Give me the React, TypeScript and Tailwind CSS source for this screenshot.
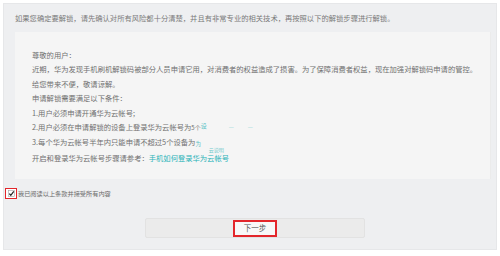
import React from "react";

const font = { fontFamily: '"Noto Sans CJK SC", "Noto Sans", sans-serif' };

export default function App() {
  return (
    <div className="w-[500px] h-[256px] bg-white pt-[3px] px-[3px] overflow-hidden" style={font}>
      <div className="h-[247px] bg-[#eeeff1] border border-[#e6e7e9] flex flex-col">
        <div className="h-[28px] flex items-center pl-[11px] text-[7.3px] text-[#7a7a7a] whitespace-nowrap">
          如果您确定要解锁，请先确认对所有风险都十分清楚，并且有非常专业的相关技术，再按照以下的解锁步骤进行解锁。
        </div>
        <div className="ml-[11px] mr-[5px] h-[147px] bg-[#f5f5f5] border-r border-[#ebebeb] pl-[17px] pt-[16px] text-[7.3px] leading-[14.4px] text-[#707070] whitespace-nowrap">
          <div>尊敬的用户：</div>
          <div>近期，华为发现手机刷机解锁码被部分人员申请它用，对消费者的权益造成了损害。为了保障消费者权益，现在加强对解锁码申请的管控。</div>
          <div>给您带来不便，敬请谅解。</div>
          <div>申请解锁需要满足以下条件：</div>
          <div>1.用户必须申请开通华为云帐号;</div>
          <div>
            2.用户必须在申请解锁的设备上登录华为云帐号为
            <span className="text-[6px]">5个</span>
            <span className="text-[6px] text-[#5cc3c6] relative -top-[2px]">设</span>
            <span className="ml-[22px] text-[5px] text-[#9fdadb] relative -top-[1px]">一</span>
            <span className="ml-[14px] text-[5px] text-[#9fdadb] relative -top-[1px]">一</span>
          </div>
          <div>
            3.每个华为云帐号半年内只能申请不超过5个设备为
            <span className="text-[5.5px] text-[#5cc3c6] relative top-[1px]">为</span>
          </div>
          <div>
            开启和登录华为云帐号步骤请参考：
            <span className="relative text-[#29b3b8]">
              手机如何登录华为云帐号
              <span className="absolute left-[60px] -top-[6px] text-[5px] text-[#6fcacc] leading-none">云说明</span>
            </span>
          </div>
        </div>
        <div className="mt-[9px] h-[11px] flex items-center pl-[1px]">
          <div className="w-[12px] h-[11px] border border-[#e3262b] flex items-center justify-center bg-white">
            <svg width="7" height="7" viewBox="0 0 8 8">
              <rect x="0.5" y="0.5" width="7" height="7" fill="#fff" stroke="#9a9a9a" strokeWidth="0.6" />
              <path d="M1.5 4.2 L3.2 6 L6.6 1.6" fill="none" stroke="#222" strokeWidth="1.4" />
            </svg>
          </div>
          <span className="ml-[1px] text-[6.2px] text-[#6a6a6a] whitespace-nowrap">我已阅读以上条款并接受所有内容</span>
        </div>
        <div className="mt-[19px] ml-[141px] w-[220px] h-[20px] bg-[#ebebeb] border border-[#e2e2e2] rounded-[2px] flex items-center justify-center">
          <div className="w-[44px] h-[17px] border-2 border-[#e3262b] bg-[#f8f8f8] flex items-center justify-center text-[7.5px] text-[#555]">
            下一步
          </div>
        </div>
      </div>
    </div>
  );
}
